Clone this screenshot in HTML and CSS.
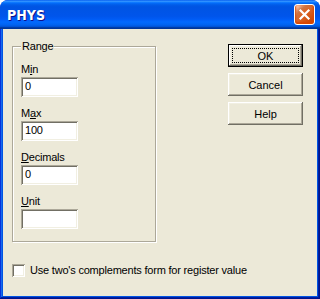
FILE: index.html
```html
<!DOCTYPE html>
<html>
<head>
<meta charset="utf-8">
<link rel="stylesheet" href="styles.css">
</head>
<body>
<div class="window">
  <div class="titlebar">
    <span class="title">PHYS</span>
    <button class="close" aria-label="Close">
      <svg width="13" height="13" viewBox="0 0 13 13"><path d="M2.5 2.5 L10.5 10.5 M10.5 2.5 L2.5 10.5" stroke="#fff" stroke-width="2.2" stroke-linecap="square"/></svg>
    </button>
  </div>
  <div class="frame">
    <div class="body">
      <div class="top">
        <fieldset class="group">
          <legend>Range</legend>
          <label class="lbl">M<u>i</u>n</label>
          <div class="edit">0</div>
          <label class="lbl">M<u>a</u>x</label>
          <div class="edit">100</div>
          <label class="lbl"><u>D</u>ecimals</label>
          <div class="edit">0</div>
          <label class="lbl"><u>U</u>nit</label>
          <div class="edit"></div>
        </fieldset>
        <div class="buttons">
          <button class="btn default">OK</button>
          <button class="btn">Cancel</button>
          <button class="btn">Help</button>
        </div>
      </div>
      <div class="checkrow">
        <span class="checkbox"></span>
        <span class="checktext">Use two's complements form for register value</span>
      </div>
    </div>
  </div>
</div>
</body>
</html>
```

FILE: styles.css
```css
* { box-sizing: border-box; }
html, body { margin: 0; padding: 0; background: #fff; }
body { font-family: "Liberation Sans", Arial, sans-serif; font-size: 11px; color: #000; letter-spacing: -0.2px; }

.window {
  width: 320px;
  height: 299px;
  display: flex;
  flex-direction: column;
  border-radius: 8px 8px 0 0;
  overflow: hidden;
  background: #0831d9;
}

.titlebar {
  height: 29px;
  flex: none;
  display: flex;
  align-items: center;
  justify-content: space-between;
  padding: 0 5px 0 7px;
  background: linear-gradient(180deg, #0058ee 0%, #3593ff 4%, #288eff 6%, #127dff 8%, #036ffc 10%, #0262ee 14%, #0057e5 20%, #0054e3 24%, #0055eb 56%, #005bf5 66%, #026afe 76%, #0062ef 86%, #0052d6 92%, #0040ab 94%, #003092 100%);
}

.title {
  font-family: "DejaVu Sans Condensed", "DejaVu Sans", sans-serif;
  font-stretch: condensed;
  font-weight: bold;
  font-size: 14px;
  color: #fff;
  text-shadow: 1px 1px #0f1089;
  letter-spacing: 0;
  margin-top: 1px;
}

.close {
  width: 21px;
  height: 21px;
  padding: 0;
  margin: 0;
  border: 1px solid #fff;
  border-radius: 3px;
  display: flex;
  align-items: center;
  justify-content: center;
  background: radial-gradient(circle at 90% 90%, #cc4600 0%, #dc6527 55%, #cd7546 70%, #ffccb2 90%, #fff 100%);
  box-shadow: inset 0 -1px 2px 1px #da4600;
}

.frame {
  flex: 1;
  display: flex;
  padding: 0 3px 3px 3px;
  background: #0054e3;
  box-shadow: inset -1px -1px #00138c, inset 1px 0 #0831d9, inset -2px -2px #001ea0, inset 2px 0 #166aee;
}

.body {
  flex: 1;
  background: #ece9d8;
  display: flex;
  flex-direction: column;
}

.top {
  display: flex;
  justify-content: space-between;
  padding: 0 14px 0 9px;
}

.group {
  margin: 11px 0 0 0;
  width: 144px;
  height: 202px;
  padding: 10px 8px 0 8px;
  border: 1px solid #aca899;
  box-shadow: 1px 1px 0 #fff, inset 1px 1px 0 #fff;
  display: flex;
  flex-direction: column;
  align-items: flex-start;
}

.group legend {
  padding: 0 1px;
  background: #ece9d8;
  line-height: 13px;
}

.lbl {
  display: block;
  line-height: 13px;
  margin: 0 0 1px 0;
}

.edit {
  width: 57px;
  height: 20px;
  background: #fff;
  padding: 3px 0 0 4px;
  line-height: 13px;
  margin-bottom: 10px;
  box-shadow: inset 1px 1px #aca899, inset -1px -1px #fff, inset 2px 2px #716f64, inset -2px -2px #f1efe2;
}

.buttons {
  margin-top: 15px;
  display: flex;
  flex-direction: column;
  gap: 6px;
}

.btn {
  width: 75px;
  height: 23px;
  padding: 0;
  border: none;
  background: #ece9d8;
  font-family: inherit;
  font-size: 11px;
  letter-spacing: 0;
  color: #000;
  box-shadow: inset -1px -1px #716f64, inset 1px 1px #fff, inset -2px -2px #aca899, inset 2px 2px #f1efe2;
}

.btn.default {
  border: 1px solid #000;
  outline: 1px dotted #000;
  outline-offset: -5px;
}

.checkrow {
  display: flex;
  align-items: center;
  margin: 22px 0 0 9px;
  gap: 5px;
}

.checkbox {
  width: 13px;
  height: 13px;
  background: #fff;
  box-shadow: inset 1px 1px #aca899, inset -1px -1px #fff, inset 2px 2px #716f64, inset -2px -2px #f1efe2;
}

.checktext {
  line-height: 13px;
}
```
